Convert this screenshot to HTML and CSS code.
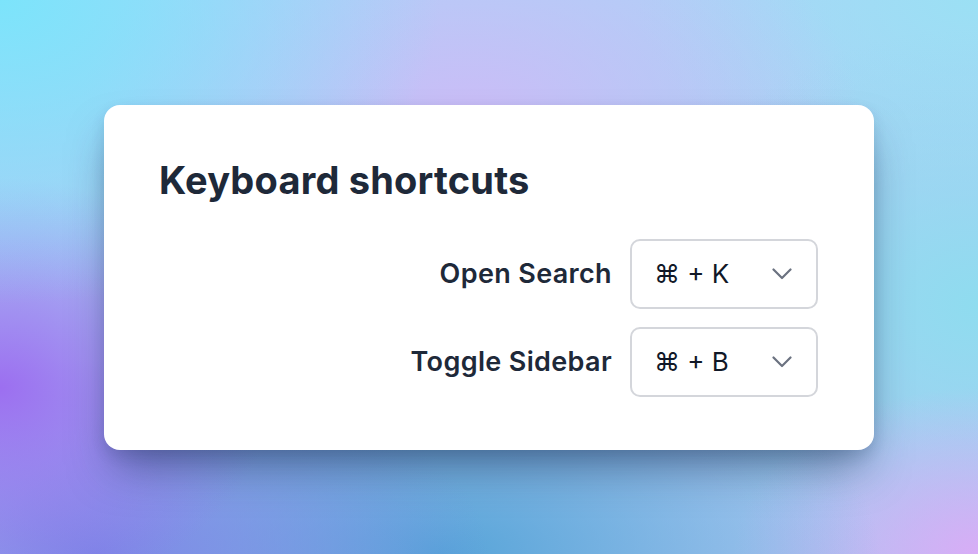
FILE: index.html
```html
<!DOCTYPE html>
<html lang="en">
<head>
<meta charset="utf-8">
<title>Keyboard shortcuts</title>
<link rel="stylesheet" href="styles.css">
</head>
<body>
<main class="stage">
  <section class="card">
    <h1 class="title">Keyboard shortcuts</h1>
    <div class="rows">
      <div class="row">
        <span class="label">Open Search</span>
        <div class="select">
          <span class="value">⌘ + K</span>
          <svg class="chev" width="20" height="12" viewBox="0 0 20 12" aria-hidden="true"><polyline points="1.5,1.5 10,10 18.5,1.5" fill="none" stroke="#6b7280" stroke-width="2.2" stroke-linecap="round" stroke-linejoin="round"/></svg>
        </div>
      </div>
      <div class="row">
        <span class="label">Toggle Sidebar</span>
        <div class="select">
          <span class="value">⌘ + B</span>
          <svg class="chev" width="20" height="12" viewBox="0 0 20 12" aria-hidden="true"><polyline points="1.5,1.5 10,10 18.5,1.5" fill="none" stroke="#6b7280" stroke-width="2.2" stroke-linecap="round" stroke-linejoin="round"/></svg>
        </div>
      </div>
    </div>
  </section>
</main>
</body>
</html>
```

FILE: styles.css
```css
html, body {
  margin: 0;
  padding: 0;
  height: 100%;
}

body {
  font-family: Inter, "Noto Sans", sans-serif;
  color: #1f2937;
  background-color: #a9cdf4;
  background-image:
    radial-gradient(ellipse 45% 55% at 0% 0%, #7ce4fb 0%, rgba(124,228,251,0) 100%),
    radial-gradient(ellipse 40% 45% at 48% 22%, #cbbcf7 0%, rgba(203,188,247,0) 100%),
    radial-gradient(ellipse 28% 38% at 0% 70%, #9c6ff0 0%, rgba(156,111,240,0) 100%),
    radial-gradient(ellipse 40% 35% at 10% 100%, #7c86e6 0%, rgba(124,134,230,0) 100%),
    radial-gradient(ellipse 45% 40% at 45% 100%, #56a4d8 0%, rgba(86,164,216,0) 100%),
    radial-gradient(ellipse 25% 30% at 100% 100%, #d8adf6 0%, rgba(216,173,246,0) 100%),
    radial-gradient(ellipse 35% 50% at 100% 55%, #8fdcef 0%, rgba(143,220,239,0) 100%),
    radial-gradient(ellipse 35% 35% at 100% 0%, #9be0f4 0%, rgba(155,224,244,0) 100%),
    linear-gradient(180deg, #abd3f7 0%, #a9c7f0 100%);
}

.stage {
  height: 554px;
  display: flex;
  align-items: center;
  justify-content: center;
}

.card {
  box-sizing: border-box;
  width: 770px;
  height: 345px;
  background: #ffffff;
  border-radius: 16px;
  padding: 52px 56px 52px 55px;
  box-shadow: 0 26px 44px -10px rgba(20, 40, 80, 0.5), 0 6px 14px rgba(20, 40, 80, 0.12);
}

.title {
  margin: 0;
  font-size: 38px;
  line-height: 46px;
  font-weight: 700;
  letter-spacing: 0.2px;
  color: #1e2939;
}

.rows {
  margin-top: 36px;
  display: flex;
  flex-direction: column;
  gap: 18px;
}

.row {
  display: flex;
  align-items: center;
  justify-content: flex-end;
  gap: 18px;
}

.label {
  font-size: 27px;
  font-weight: 600;
  letter-spacing: 0.35px;
  color: #1e2939;
}

.select {
  box-sizing: border-box;
  width: 188px;
  height: 70px;
  border: 2px solid #d4d6db;
  border-radius: 10px;
  display: flex;
  align-items: center;
  justify-content: space-between;
  padding: 0 24px 0 22px;
}

.value {
  font-size: 26px;
  font-weight: 400;
  color: #111827;
}

.chev {
  display: block;
}
```
